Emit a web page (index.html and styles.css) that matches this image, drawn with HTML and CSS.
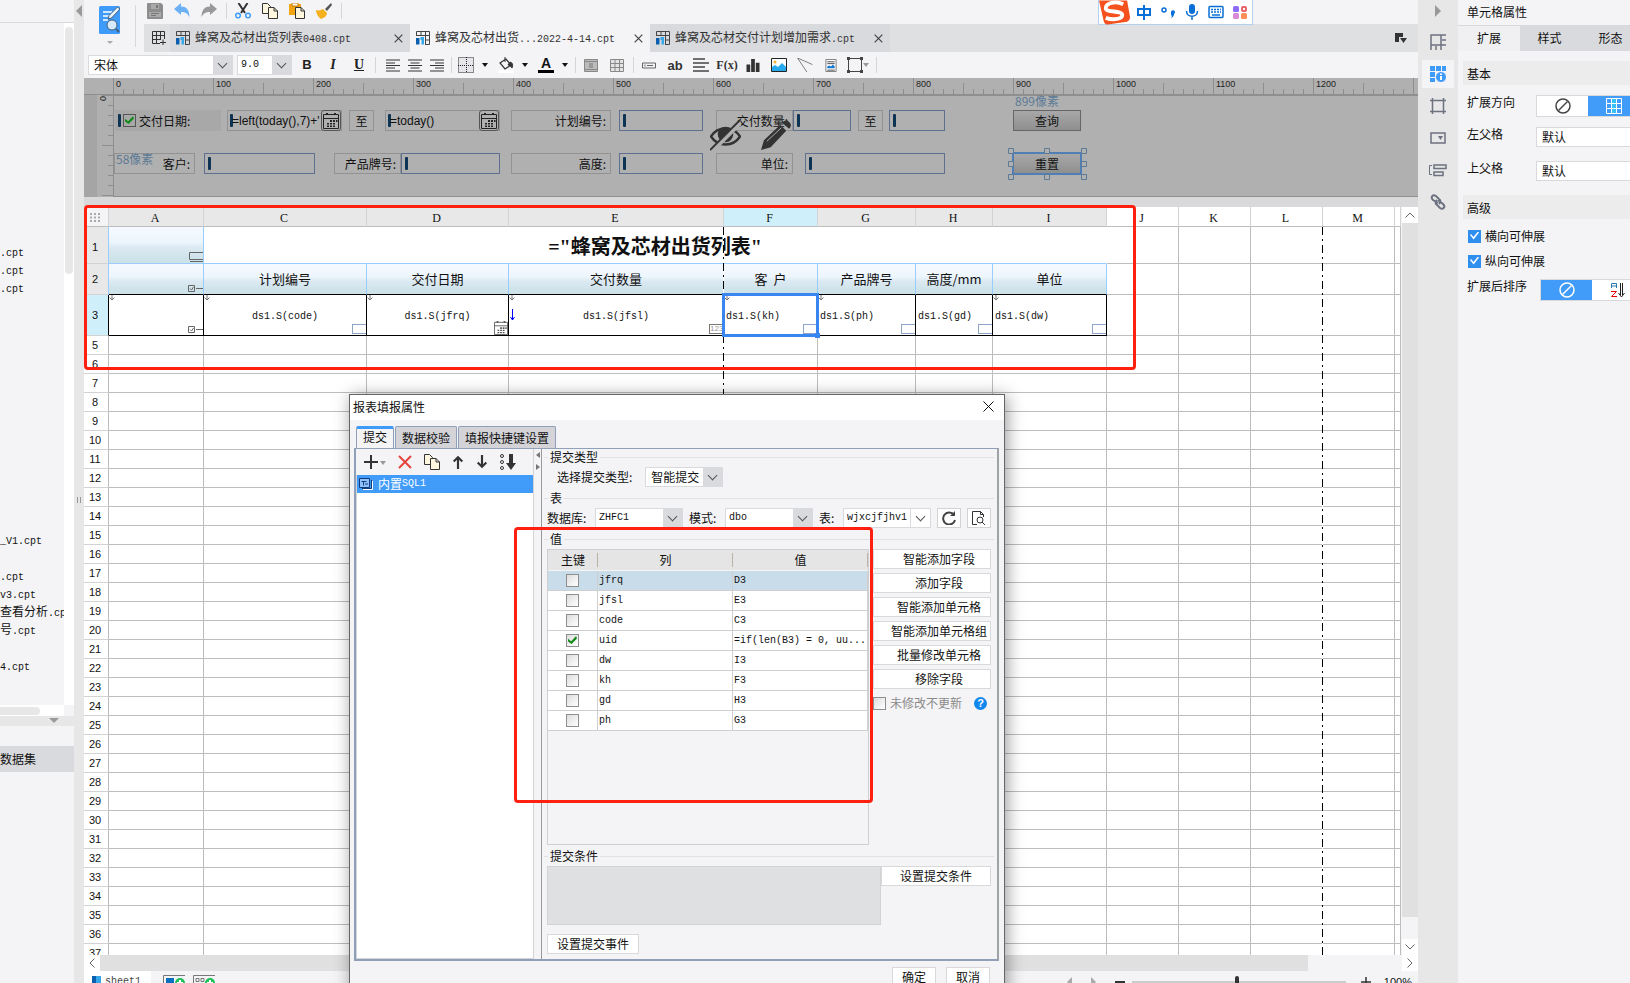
FILE: index.html
```html
<!DOCTYPE html>
<html lang="zh-CN">
<head>
    <meta charset="UTF-8">
    <meta name="viewport" content="width=device-width, initial-scale=1.0">
    <title>蜂窝及芯材出货列表</title>
    <link rel="stylesheet" href="styles.css">
</head>
<body>

    <!-- iconos compartidos -->
    <svg class="defs" aria-hidden="true">
        <symbol id="i-cpt" viewBox="0 0 14 14">
            <path d="M.5 5V.5h13v13H9M.5 4.500h13M5 .5v4M9.500 .5v13M9.500 9h4" fill="none" stroke="#444"/>
            <path d="M0 7h3.500v6.500H0z" fill="#0a5fae"/>
            <path d="M4.500 6h3.500v7.500H5.500V9H4.500z" fill="#35a7e8"/>
        </symbol>
        <symbol id="i-close" viewBox="0 0 9 9"><path d="M.7.7l7.600 7.600M8.300.7L.7 8.300" stroke="#444" stroke-width="1.200"/></symbol>
        <symbol id="i-copy" viewBox="0 0 16 16">
            <path d="M.5.5h5l3 3v7h-8z" fill="#fff6df" stroke="#333"/>
            <path d="M6.500 4.500h5.500l3.500 3.500v7.500h-9z" fill="#fff6df" stroke="#333"/>
            <path d="M12 4.500V8h3.500" fill="none" stroke="#333"/>
        </symbol>
        <symbol id="i-cal" viewBox="0 0 16 16">
            <path d="M.5 1.500h15v14H.5zM.5 5.500h15" fill="none" stroke="currentColor"/>
            <path d="M3 0h2v2H3zM11 0h2v2h-2zM7 7h2v2H7zM10 7h2v2h-2zM13 7h1.500v2H13zM4 10h2v1.500H4zM7 10h2v1.500H7zM10 10h2v1.500h-2zM4 12.500h2V14H4zM7 12.500h2V14H7zM10 12.500h2V14h-2z" fill="currentColor"/>
        </symbol>
        <symbol id="i-none" viewBox="0 0 16 16"><circle cx="8" cy="8" r="7" fill="none" stroke="currentColor" stroke-width="1.500"/><path d="M3.500 12.500l9-9" stroke="currentColor" stroke-width="1.500"/></symbol>
        <symbol id="i-grow" viewBox="0 0 6 6"><path d="M3 0v5M.5 2.500L3 5l2.500-2.500" fill="none" stroke="#777"/></symbol>
        <symbol id="i-tick" viewBox="0 0 15 7"><path d="M.5.5h6v6h-6zM8 3.500h7M2 3.500l1.500 1.500L5.500 2" fill="none" stroke="#666"/></symbol>
    </svg>

    <div class="app">

        <aside class="files">
            <div class="files-head"></div>
            <div class="files-body">
                <ul class="file-list">
                    <li><span class="m">.cpt</span></li>
                    <li><span class="m">.cpt</span></li>
                    <li><span class="m">.cpt</span></li>
                    <li class="far"><span class="m">_V1.cpt</span></li>
                    <li class="skip"><span class="m">.cpt</span></li>
                    <li><span class="m">v3.cpt</span></li>
                    <li>查看分析<span class="m">.cpt</span></li>
                    <li>号<span class="m">.cpt</span></li>
                    <li class="skip"><span class="m">4.cpt</span></li>
                </ul>
                <div class="files-scroll"><i></i></div>
            </div>
            <div class="files-hscroll"><i></i></div>
            <div class="files-split"><i></i></div>
            <div class="dataset">数据集</div>
        </aside>

        <div class="gutter">
            <svg class="gutter-arrow" viewBox="0 0 6 12"><path d="M6 0v12L0 6z" fill="#999"/></svg>
            <svg class="gutter-grip" viewBox="0 0 4 6"><path d="M.5 0v6M3.500 0v6" stroke="#999"/></svg>
        </div>

        <main class="work">
            <header class="top">
                <button class="app-btn" aria-label="预览">
                    <svg class="app-icon" viewBox="0 0 22 29">
                        <rect width="21" height="28" y="0" rx="1.500" fill="#3f9bf9"/>
                        <path d="M4 6h9M4 10h6M4 14h5" stroke="#fff" stroke-width="1.500"/>
                        <path d="M9 13l1-3.500L18.500 1l2.500 2-8.500 9z" fill="#e8f2fb" stroke="#44617c"/>
                        <circle cx="13" cy="19" r="5" fill="#d5ebfb" stroke="#44617c"/>
                        <path d="M17 23l3 3" stroke="#44617c" stroke-width="2"/>
                    </svg>
                    <svg class="app-caret" viewBox="0 0 6 3"><path d="M0 0h6L3 3z" fill="#aaa"/></svg>
                </button>
                <div class="top-main">
                    <div class="quick">
                        <button aria-label="保存"><svg viewBox="0 0 16 16"><path d="M0 1a1 1 0 0 1 1-1h13l2 2v13a1 1 0 0 1-1 1H1a1 1 0 0 1-1-1z" fill="#8d8d8d"/><path d="M4 1h8v5H4z" fill="#a9a9a9"/><path d="M9 2h2v3H9z" fill="#777"/><path d="M2 9h12v5H2z" fill="#a9a9a9"/><path d="M4 10.500h8M4 12.500h5" stroke="#777"/></svg></button>
                        <button aria-label="撤销"><svg viewBox="0 0 16 16"><path d="M0 6l7-6v3.500c5 0 8.500 3 8.500 11-1.500-4-4-5.500-8.500-5.500V12z" fill="#6cb0f5"/></svg></button>
                        <button aria-label="重做"><svg viewBox="0 0 16 16"><path d="M16 6L9 0v3.500C4 3.500.5 6.500.5 14.500 2 10.500 4.500 9 9 9v3z" fill="#999"/></svg></button>
                        <i class="sep"></i>
                        <button aria-label="剪切"><svg viewBox="0 0 16 16"><path d="M3.500 0l6.500 10M12.500 0L6 10" stroke="#333" stroke-width="2"/><circle cx="3" cy="12.500" r="2.300" fill="none" stroke="#3f9bf9" stroke-width="1.500"/><circle cx="13" cy="12.500" r="2.300" fill="none" stroke="#3f9bf9" stroke-width="1.500"/></svg></button>
                        <button aria-label="复制"><svg><use href="#i-copy"/></svg></button>
                        <button aria-label="粘贴"><svg viewBox="0 0 16 16"><path d="M0 1h12v11H0z" fill="#f2a413"/><path d="M3 0h6v3H3z" fill="#fff" stroke="#c47f05"/><path d="M6.500 4.500h5.500l3.500 3.500v7.500h-9z" fill="#fff6df" stroke="#333"/><path d="M12 4.500V8h3.500" fill="none" stroke="#333"/></svg></button>
                        <button aria-label="格式刷"><svg viewBox="0 0 16 16"><path d="M15 0l1 2-5 6-2-2z" fill="#555"/><path d="M0 7c3 1 5 0 7-1l4 4c0 3-3 5-6 6-3-2-5-6-5-9z" fill="#f5b01e"/></svg></button>
                        <i class="sep"></i>
                    </div>
                    <nav class="tabs">
                        <button class="tab-new" aria-label="新建"><svg viewBox="0 0 14 14"><path d="M8 12.500H.5V.5h12V8M.5 4.500h12M.5 8.500H9M4.500 .5v12M8.500.5v8M8 11.500h6M11 8.500v6" fill="none" stroke="#333"/></svg></button>
                        <div class="tab"><svg class="cpt"><use href="#i-cpt"/></svg><span>蜂窝及芯材出货列表<span class="m">0408.cpt</span></span><button aria-label="关闭"><svg><use href="#i-close"/></svg></button></div>
                        <div class="tab active"><svg class="cpt"><use href="#i-cpt"/></svg><span>蜂窝及芯材出货<span class="m">...2022-4-14.cpt</span></span><button aria-label="关闭"><svg><use href="#i-close"/></svg></button></div>
                        <div class="tab"><svg class="cpt"><use href="#i-cpt"/></svg><span>蜂窝及芯材交付计划增加需求<span class="m">.cpt</span></span><button aria-label="关闭"><svg><use href="#i-close"/></svg></button></div>
                        <svg class="tab-menu" viewBox="0 0 12 10"><path d="M0 0h8v4H4v5H0z" fill="#333"/><path d="M5 5h7l-3.500 5z" fill="#333"/></svg>
                    </nav>
                </div>
                <div class="ime">
                    <svg class="sogou" viewBox="0 0 32 25"><path d="M0 0h29l3 17c0 3-1 4-3 5l-20 3c-2 0-3-1-4-3z" fill="#f4511e"/><path d="M25 4C17 0 7 3 7 8c0 5 17 2 17 7 0 4-9 6-17 3" fill="none" stroke="#fff" stroke-width="4"/></svg>
                    <svg viewBox="0 0 16 16"><path d="M2 5h12v6H2zM8 1v15" fill="none" stroke="#0a6fd6" stroke-width="2"/></svg>
                    <svg viewBox="0 0 16 16"><circle cx="4" cy="6" r="2" fill="none" stroke="#0a6fd6" stroke-width="1.500"/><path d="M11 8a2 2 0 1 1 3 2c0 2-1 3-3 4 1-2 1-2 0-3z" fill="#0a6fd6"/></svg>
                    <svg viewBox="0 0 16 16"><rect x="5" y="0" width="6" height="10" rx="3" fill="#0a6fd6"/><path d="M2.500 7c0 7 11 7 11 0M8 12v4" fill="none" stroke="#0a6fd6" stroke-width="1.500"/></svg>
                    <svg viewBox="0 0 16 16"><rect x="1" y="2.500" width="14" height="11" rx="1" fill="none" stroke="#0a6fd6" stroke-width="1.500"/><path d="M3 5.500h10M3 8h10" stroke="#0a6fd6" stroke-width="1.500" stroke-dasharray="2 1"/><path d="M4 11h8" stroke="#0a6fd6" stroke-width="1.500"/></svg>
                    <svg viewBox="0 0 16 16"><rect x="1" y="2" width="6" height="6" rx="1.500" fill="#8f6cf5"/><rect x="10" y="3" width="4" height="4" rx="1" fill="none" stroke="#e8646a" stroke-width="2"/><rect x="1" y="9" width="6" height="6" rx="1.500" fill="#d88ad8"/><rect x="9" y="9" width="6" height="6" rx="1.500" fill="#ff8e56"/></svg>
                </div>
            </header>

            <div class="format">
                <div class="combo font-combo"><select aria-label="字体"><option>宋体</option></select></div>
                <div class="combo size-combo"><select class="m" aria-label="字号"><option>9.0</option></select></div>
                <button class="fb" aria-label="加粗"><b>B</b></button>
                <button class="fb" aria-label="斜体"><em>I</em></button>
                <button class="fb" aria-label="下划线"><u>U</u></button>
                <i class="sep"></i>
                <button class="ic" aria-label="左对齐"><svg viewBox="0 0 14 12"><path d="M0 .5h14M0 3.500h9M0 6h14M0 8.500h9M0 11.500h14" stroke="#333"/></svg></button>
                <button class="ic" aria-label="居中"><svg viewBox="0 0 14 12"><path d="M0 .5h14M2.500 3.500h9M0 6h14M2.500 8.500h9M0 11.500h14" stroke="#333"/></svg></button>
                <button class="ic" aria-label="右对齐"><svg viewBox="0 0 14 12"><path d="M0 .5h14M5 3.500h9M0 6h14M5 8.500h9M0 11.500h14" stroke="#333"/></svg></button>
                <i class="sep"></i>
                <button class="ic drop" aria-label="边框"><svg viewBox="0 0 16 16"><path d="M.5.500h15v15H.5zM8.500 0v16M0 8.500h16" fill="#e6e6ea" stroke="#222" stroke-dasharray="1 1"/></svg></button>
                <button class="ic drop" aria-label="背景"><svg viewBox="0 0 16 16"><path d="M2 6l6-4 5 6-6 4z" fill="none" stroke="#333" stroke-width="1.300"/><path d="M7 0v5M12 5c3 1 3 3 2 6-1-2-3-3-4-3z" fill="#333" stroke="#333"/><path d="M0 13h16v3H0z" fill="#fff"/></svg></button>
                <button class="ic drop" aria-label="字体颜色"><span class="color-a">A</span></button>
                <i class="sep tight"></i>
                <button class="ic wide" aria-label="合并"><svg viewBox="0 0 14 13"><path d="M.5.5h13v12H.5z" fill="#bbb" stroke="#888"/><path d="M0 2.500h14M0 10.500h14" stroke="#888"/><path d="M5 4h4v5H5z" fill="#999"/></svg></button>
                <button class="ic wide" aria-label="取消合并"><svg viewBox="0 0 14 13"><path d="M.5.5h13v12H.5z" fill="#e4e4e4" stroke="#888"/><path d="M0 4.500h14M0 8.500h14M5 0v13M9.500 0v13" stroke="#888"/></svg></button>
                <i class="sep tight"></i>
                <button class="ic wide" aria-label="控件"><svg viewBox="0 0 14 6"><path d="M.5.500h13v5H.5zM5 3h6M3 2v2" fill="none" stroke="#666"/></svg></button>
                <button class="ic wide ab" aria-label="文本">ab</button>
                <button class="ic wide" aria-label="富文本"><svg class="big" viewBox="0 0 16 14"><path d="M0 1h12M0 5h16M0 9h12M0 13h16" stroke="#444" stroke-width="1.500"/></svg></button>
                <button class="ic wide fx" aria-label="公式">F(x)</button>
                <button class="ic wide" aria-label="图表"><svg viewBox="0 0 14 14"><path d="M0 6h4v8H0zM5 0h4v14H5zM10 4h4v10h-4z" fill="#333"/></svg></button>
                <button class="ic wide" aria-label="图片"><svg class="big" viewBox="0 0 16 14"><path d="M.5.500h15v13H.5z" fill="#fff" stroke="#222"/><circle cx="4" cy="4" r="1.500" fill="#f5b030"/><path d="M1 13V9l3-2 3 2 4-4 4 4v4z" fill="#27a9ee"/></svg></button>
                <button class="ic wide" aria-label="斜线"><svg class="big" viewBox="0 0 16 15"><path d="M0 0l16 7M0 0l10 15" stroke="#777" fill="none"/></svg></button>
                <button class="ic wide" aria-label="子报表"><svg viewBox="0 0 12 14"><path d="M.5.500h11v13H.5z" fill="#fff" stroke="#777"/><path d="M2 3h8M2 5h8M2 12h8" stroke="#444"/><path d="M2 10V8l2-1 2 1 2-2 2 2v2z" fill="#1478d0"/></svg></button>
                <button class="ic drop pale" aria-label="悬浮元素"><svg viewBox="0 0 16 16"><path d="M1.500 1.500h13v13h-13z" fill="none" stroke="#444"/><path d="M0 0h3v3H0zM13 0h3v3h-3zM0 13h3v3H0zM13 13h3v3h-3z" fill="#444"/></svg></button>
                <i class="sep end"></i>
            </div>

            <section class="param">
                <div class="ruler-x">
                    <span>0</span><span>100</span><span>200</span><span>300</span><span>400</span><span>500</span><span>600</span><span>700</span><span>800</span><span>900</span><span>1000</span><span>1100</span><span>1200</span>
                </div>
                <div class="ruler-y"><span>0</span></div>
                <div class="canvas">
                    <label class="w r1 w-date"><input type="checkbox" class="box" checked>交付日期:</label>
                    <div class="w r1 w-from bar plain"><input value="=left(today(),7)+'" aria-label="开始日期"><button class="cal" aria-label="选择日期"><svg><use href="#i-cal"/></svg></button></div>
                    <div class="w r1 w-to1 mid">至</div>
                    <div class="w r1 w-until bar plain"><input value="=today()" aria-label="结束日期"><button class="cal" aria-label="选择日期"><svg><use href="#i-cal"/></svg></button></div>
                    <label class="w r1 w-l1" for="p-plan">计划编号:</label>
                    <div class="w r1 w-i1 bar"><input id="p-plan"></div>
                    <label class="w r1 w-l2" for="p-min">交付数量:</label>
                    <div class="w r1 w-min bar"><input id="p-min"></div>
                    <div class="w r1 w-to2 mid">至</div>
                    <div class="w r1 w-max bar"><input aria-label="最大数量"></div>
                    <button class="w r1 w-btn">查询</button>
                    <label class="w r2 w-kh" for="p-kh">客户:</label>
                    <div class="w r2 w-ikh bar"><input id="p-kh"></div>
                    <label class="w r2 w-ph" for="p-ph">产品牌号:</label>
                    <div class="w r2 w-iph bar"><input id="p-ph"></div>
                    <label class="w r2 w-l1" for="p-gd">高度:</label>
                    <div class="w r2 w-i1 bar"><input id="p-gd"></div>
                    <label class="w r2 w-l2" for="p-dw">单位:</label>
                    <div class="w r2 w-idw bar"><input id="p-dw"></div>
                    <button class="w r2 w-btn picked">重置</button>
                    <svg class="handles" viewBox="0 0 80 32"><path d="M.5.500h5v5h-5zM36.500.500h5v5h-5zM73.500.500h5v5h-5zM.5 13.500h5v5h-5zM73.500 13.500h5v5h-5zM.5 26.500h5v5h-5zM36.500 26.500h5v5h-5zM73.500 26.500h5v5h-5z" fill="#b0b0b0" stroke="#5c7a96"/></svg>
                    <span class="px px-top">899像素</span>
                    <span class="px px-left">58像素</span>
                    <svg class="eye" viewBox="0 0 32 32"><path d="M1 17C8 6 24 6 31 17 24 28 8 28 1 17z" fill="none" stroke="#333" stroke-width="2.500"/><circle cx="16" cy="15" r="8" fill="#333"/><path d="M3 31L31 3" stroke="#b0b0b0" stroke-width="5"/><path d="M0 31L31 0" stroke="#333" stroke-width="2"/></svg>
                    <svg class="pencil" viewBox="0 0 32 32"><path d="M0 31l3-10L20 5l6 6-16 17zM22 3c2-3 5-3 7-1s3 4 0 7z" fill="#333"/><path d="M6 22L21 8" stroke="#b0b0b0"/></svg>
                </div>
            </section>

            <section class="sheet">
                <div class="grid-wrap">
                    <table class="grid">
                        <colgroup><col class="c-n"><col class="c-a"><col class="c-c"><col class="c-d"><col class="c-e"><col class="c-f"><col class="c-g"><col class="c-h"><col class="c-i"><col class="c-j"><col class="c-j"><col class="c-j"><col class="c-j"><col></colgroup>
                        <thead>
                            <tr><th class="corner"><svg viewBox="0 0 10 9"><path d="M0 1h10M0 4.500h10M0 8h10" stroke="#aaa" stroke-width="2" stroke-dasharray="2 2"/></svg></th><th>A</th><th>C</th><th>D</th><th>E</th><th class="hot">F</th><th>G</th><th>H</th><th>I</th><th class="out">J</th><th class="out">K</th><th class="out">L</th><th class="out">M</th><th class="out"></th></tr>
                        </thead>
                        <tbody id="rows">
                            <tr class="row1"><th>1</th><td class="shade"><svg class="mark mark-text" viewBox="0 0 14 10"><path d="M14 .5H.5v7H14M1 9.500h13" fill="none" stroke="#666"/></svg></td><td class="title" colspan="7">="蜂窝及芯材出货列表"</td><td></td><td></td><td></td><td></td><td></td></tr>
                            <tr class="row2"><th>2</th><td class="shade"><svg class="mark mark-tick"><use href="#i-tick"/></svg></td><td class="shade">计划编号</td><td class="shade">交付日期</td><td class="shade">交付数量</td><td class="shade">客&nbsp; 户</td><td class="shade">产品牌号</td><td class="shade">高度/mm</td><td class="shade">单位</td><td></td><td></td><td></td><td></td><td></td></tr>
                            <tr class="row3 m"><th class="hot">3</th><td class="ink"><svg class="grow"><use href="#i-grow"/></svg><svg class="mark mark-tick"><use href="#i-tick"/></svg></td><td class="ink"><svg class="grow"><use href="#i-grow"/></svg>ds1.S(code)<i class="mark mark-box"></i></td><td class="ink"><svg class="grow"><use href="#i-grow"/></svg>ds1.S(jfrq)<svg class="mark mark-cal"><use href="#i-cal"/></svg></td><td class="ink"><svg class="grow"><use href="#i-grow"/></svg><svg class="parent" viewBox="0 0 5 12"><path d="M2.500 0v11M.5 8l2 3 2-3" fill="none" stroke="#00f"/></svg>ds1.S(jfsl)<i class="mark mark-num">123</i></td><td class="ink start"><svg class="grow"><use href="#i-grow"/></svg>ds1.S(kh)<i class="mark mark-box"></i><i class="cursor"></i></td><td class="ink start"><svg class="grow"><use href="#i-grow"/></svg>ds1.S(ph)<i class="mark mark-box"></i></td><td class="ink start">ds1.S(gd)<i class="mark mark-box"></i></td><td class="ink start"><svg class="grow"><use href="#i-grow"/></svg>ds1.S(dw)<i class="mark mark-box"></i></td><td></td><td></td><td></td><td></td><td></td></tr>
                        </tbody>
                    </table>
                    <i class="page-line page-1"></i>
                    <i class="page-line page-2"></i>
                </div>
                <div class="vscroll">
                    <button aria-label="向上"><svg viewBox="0 0 10 6"><path d="M.5 5.500L5 1l4.500 4.500" fill="none" stroke="#666"/></svg></button>
                    <i></i>
                    <button aria-label="向下"><svg viewBox="0 0 10 6"><path d="M.5.500L5 5 9.500.500" fill="none" stroke="#666"/></svg></button>
                </div>
            </section>

            <div class="hscroll">
                <button aria-label="向左"><svg viewBox="0 0 6 10"><path d="M5.500.500L1 5l4.500 4.500" fill="none" stroke="#666"/></svg></button>
                <i></i>
                <button aria-label="向右"><svg viewBox="0 0 6 10"><path d="M.5.500L5 5 .5 9.500" fill="none" stroke="#666"/></svg></button>
            </div>

            <footer class="status">
                <div class="status-in">
                    <button class="sheet-tab"><svg viewBox="0 0 9 12"><path d="M0 0h4v12H0z" fill="#0a5fae"/><path d="M4 0h5v9H4z" fill="#35a7e8"/></svg><span class="m">sheet1</span></button>
                    <button class="sheet-add" aria-label="新增报表"><svg viewBox="0 0 22 14"><path d="M22 .5H.5V14" fill="none" stroke="#777"/><path d="M3 3h8v11H3z" fill="#0a6fc0"/><circle cx="17" cy="8" r="5" fill="#1fbf5a"/><path d="M14 8h6M17 5v6" stroke="#fff" stroke-width="2"/></svg></button>
                    <button class="sheet-add" aria-label="新增聚合报表"><svg viewBox="0 0 22 14"><path d="M22 .5H.5V14M3 3.500h3v3H3zM8 3.500h3v3H8z" fill="none" stroke="#777"/><circle cx="17" cy="8" r="5" fill="#1fbf5a"/><path d="M14 8h6M17 5v6" stroke="#fff" stroke-width="2"/></svg></button>
                    <div class="zoom">
                        <svg class="z-prev" viewBox="0 0 5 10"><path d="M5 0v10L0 5z" fill="#aaa"/></svg>
                        <svg class="z-next" viewBox="0 0 5 10"><path d="M0 0v10l5-5z" fill="#aaa"/></svg>
                        <button aria-label="缩小"><svg viewBox="0 0 10 10"><path d="M0 5h10" stroke="#333" stroke-width="2"/></svg></button>
                        <input type="range" min="10" max="200" value="103" aria-label="缩放">
                        <button aria-label="放大"><svg viewBox="0 0 10 10"><path d="M0 5h10M5 0v10" stroke="#333" stroke-width="1.500"/></svg></button>
                        <span>100%</span>
                    </div>
                </div>
            </footer>

            <div class="dialog" role="dialog" aria-label="报表填报属性">
                <div class="dlg-title"><span>报表填报属性</span><button aria-label="关闭"><svg viewBox="0 0 11 11"><path d="M.5.500l10 10M10.500.500l-10 10" stroke="#111"/></svg></button></div>
                <div class="dlg-tabs">
                    <button class="on">提交</button><button>数据校验</button><button>填报快捷键设置</button>
                </div>
                <div class="dlg-pane">
                    <div class="dlg-left">
                        <div class="dlg-tools">
                            <button aria-label="添加"><svg viewBox="0 0 22 14"><path d="M0 7h14M7 0v14" stroke="#333" stroke-width="2"/><path d="M16 6h6l-3 4z" fill="#999"/></svg></button>
                            <button aria-label="删除"><svg viewBox="0 0 14 14"><path d="M1 1l12 12M13 1L1 13" stroke="#e5433d" stroke-width="2"/></svg></button>
                            <button aria-label="复制"><svg><use href="#i-copy"/></svg></button>
                            <button aria-label="上移"><svg viewBox="0 0 10 13"><path d="M5 13V2M1 6l4-4 4 4" fill="none" stroke="#333" stroke-width="2"/></svg></button>
                            <button aria-label="下移"><svg viewBox="0 0 10 13"><path d="M5 0v11M1 7l4 4 4-4" fill="none" stroke="#333" stroke-width="2"/></svg></button>
                            <button aria-label="排序"><svg viewBox="0 0 16 16"><path d="M9 0h4v9h3l-5 7-5-7h3z" fill="#333"/><circle cx="2" cy="2" r="1.500" fill="none" stroke="#333"/><circle cx="2" cy="8" r="1.500" fill="none" stroke="#333"/><circle cx="2" cy="14" r="1.500" fill="none" stroke="#333"/></svg></button>
                        </div>
                        <ul class="dlg-list"><li><svg viewBox="0 0 14 12"><path d="M.5.500h10v9H.5z" fill="#8fc2fb" stroke="#123a7c"/><path d="M13.500 3v8.500H4" fill="none" stroke="#fff"/><path d="M2.500 3.500h5M4.500 3.500v4M6 6h3" stroke="#123a7c"/><path d="M12.500 2v8.500H3" fill="none" stroke="#123a7c"/></svg>内置<span class="m">SQL1</span></li></ul>
                    </div>
                    <div class="dlg-split"><svg viewBox="0 0 4 18"><path d="M4 0v6L0 3zM0 12v6l4-3z" fill="#777"/></svg></div>
                    <div class="dlg-main">
                        <div class="legend"><span>提交类型</span></div>
                        <div class="line line-type">
                            <label for="d-type">选择提交类型:</label>
                            <div class="combo"><select id="d-type"><option>智能提交</option></select></div>
                        </div>
                        <div class="legend"><span>表</span></div>
                        <div class="line line-db">
                            <label class="l3" for="d-db">数据库:</label>
                            <div class="combo"><select id="d-db" class="m"><option>ZHFC1</option></select></div>
                            <label class="l2" for="d-mode">模式:</label>
                            <div class="combo"><select id="d-mode" class="m"><option>dbo</option></select></div>
                            <label class="l1" for="d-table">表:</label>
                            <div class="combo light"><select id="d-table" class="m"><option>wjxcjfjhv1</option></select></div>
                            <button class="sq" aria-label="刷新"><svg viewBox="0 0 14 14"><path d="M12 4a6 6 0 1 0 1 5" fill="none" stroke="#444" stroke-width="2"/><path d="M13 0v5H8z" fill="#444"/></svg></button>
                            <button class="sq" aria-label="预览"><svg viewBox="0 0 14 14"><path d="M5 13.500H.5V.500h8l3 3V6M8.500.500v3h3" fill="none" stroke="#333"/><circle cx="8" cy="9" r="3" fill="none" stroke="#333"/><path d="M10 11l3 3" stroke="#333"/></svg></button>
                        </div>
                        <div class="legend"><span>值</span></div>
                        <div class="line line-values">
                            <div class="values">
                                <table>
                                    <thead><tr><th>主键</th><th>列</th><th>值</th></tr></thead>
                                    <tbody id="fields"></tbody>
                                </table>
                            </div>
                            <div class="ops">
                                <button>智能添加字段</button>
                                <button>添加字段</button>
                                <button>智能添加单元格</button>
                                <button>智能添加单元格组</button>
                                <button>批量修改单元格</button>
                                <button>移除字段</button>
                                <label><input type="checkbox" class="box" disabled>未修改不更新<i class="help">?</i></label>
                            </div>
                        </div>
                        <div class="legend"><span>提交条件</span></div>
                        <div class="line line-cond">
                            <textarea disabled aria-label="提交条件"></textarea>
                            <button>设置提交条件</button>
                        </div>
                        <button class="event-btn">设置提交事件</button>
                    </div>
                </div>
                <div class="dlg-foot"><button>确定</button><button>取消</button></div>
            </div>

            <i class="note note-grid"></i>
            <i class="note note-values"></i>
        </main>

        <nav class="rail">
            <svg class="rail-arrow" viewBox="0 0 6 12"><path d="M0 0v12l6-6z" fill="#999"/></svg>
            <button aria-label="单元格元素"><svg viewBox="0 0 16 16"><path d="M1 16V1h15M1 11h11M11 1v15M12 6h4M12 11h4M6 12v4" fill="none" stroke="#6d7280" stroke-width="1.500"/></svg></button>
            <button class="on" aria-label="单元格属性"><svg viewBox="0 0 16 16"><path d="M0 0h5v5H0zM6 0h5v5H6zM12 0h4v5h-4zM0 6h5v5H0zM0 12h5v4H0z" fill="#3f9bf9"/><circle cx="11" cy="11" r="5.500" fill="#3f9bf9" stroke="#f4f4f7"/><path d="M11 10v4M11 7.500v1.500" stroke="#fff" stroke-width="2"/></svg></button>
            <button aria-label="悬浮元素"><svg viewBox="0 0 16 16"><path d="M2.500 0v16M13.500 0v16M0 2.500h16M0 13.500h16" stroke="#6d7280" stroke-width="1.500"/></svg></button>
            <button aria-label="控件设置"><svg viewBox="0 0 16 12"><path d="M1 1h14v10H1z" fill="none" stroke="#6d7280" stroke-width="1.500"/><path d="M8 4h5l-2.500 4z" fill="#6d7280"/></svg></button>
            <button aria-label="条件属性"><svg class="wide-icon" viewBox="0 0 18 12"><path d="M5 1h12v3.500H5zM5 8h9v3.500H5z" fill="none" stroke="#6d7280" stroke-width="1.500"/><path d="M3 1.500H.5v9H3" fill="none" stroke="#6d7280"/></svg></button>
            <button aria-label="超级链接"><svg viewBox="0 0 16 16"><path d="M8 9L3 6C0 3 3 0 6 2l4 4c1 2 0 3-1 4M8 6l5 4c3 3 0 6-3 4L6 10C5 8 6 7 7 6" fill="none" stroke="#6d7280" stroke-width="2"/></svg></button>
        </nav>

        <aside class="props">
            <h2>单元格属性</h2>
            <div class="prop-tabs"><button class="on">扩展</button><button>样式</button><button>形态</button></div>
            <h3>基本</h3>
            <div class="prop"><span>扩展方向</span><div class="seg"><button aria-label="不扩展"><svg><use href="#i-none"/></svg></button><button class="on" aria-label="纵向"><svg viewBox="0 0 16 16"><path d="M5.500 0h5v16h-5z" fill="#35c3f5"/><path d="M.5.500h15v15H.5zM5.500 0v16M10.500 0v16M0 5.500h16M0 10.500h16" fill="none" stroke="#fff"/></svg></button></div></div>
            <div class="prop"><label for="g-left">左父格</label><select id="g-left"><option>默认</option></select></div>
            <div class="prop"><label for="g-up">上父格</label><select id="g-up"><option>默认</option></select></div>
            <h3>高级</h3>
            <label class="prop-check"><input type="checkbox" checked>横向可伸展</label>
            <label class="prop-check"><input type="checkbox" checked>纵向可伸展</label>
            <div class="prop sort"><span>扩展后排序</span><div class="seg"><button class="on" aria-label="不排序"><svg><use href="#i-none"/></svg></button><button aria-label="升序"><svg viewBox="0 0 16 16"><path d="M1.500 6V1.500h5V6M1.500 4h5" fill="none" stroke="#2a7ab0"/><path d="M1 9.500h5.500L1.500 14.500H7" fill="none" stroke="#e00"/><path d="M10.500 1v12M12.500 1v12M8.500 11l3 4 3-4" fill="none" stroke="#222"/></svg></button></div></div>
        </aside>
    </div>

    <script src="script.js"></script>
</body>
</html>
```

FILE: styles.css
```css
* {
    box-sizing: border-box;
}
body {
    margin: 0;
    height: 100vh;
    overflow: hidden;
    background-color: #f4f4f7;
    color: #111;
    font-family: "Noto Sans CJK SC", sans-serif;
    font-size: 12px;
    line-height: 16px;
}
button, input, select, textarea {
    font: inherit;
    color: inherit;
    margin: 0;
    padding: 0;
    border: none;
    border-radius: 0;
    background: none;
    outline: none;
}
select {
    appearance: none;
}
svg {
    display: block;
    flex: none;
}
ul {
    list-style: none;
    margin: 0;
    padding: 0;
}
.defs {
    position: absolute;
    width: 0;
    height: 0;
}
.m {
    font-family: "Liberation Mono", "Noto Sans CJK SC", monospace;
    font-size: 10px;
}
.sep {
    flex: none;
    width: 1px;
    height: 16px;
    background-color: #d5d5d8;
}
.app {
    display: flex;
    height: 100%;
}

/* panel izquierdo */
.files {
    flex: 0 0 74px;
    display: flex;
    flex-direction: column;
    min-width: 0;
}
.files-head {
    height: 23px;
    border-bottom: 1px solid #d9d9dc;
}
.files-body {
    display: flex;
    height: 682px;
}
.file-list {
    flex: 1;
    overflow: hidden;
    padding-top: 220px;
    white-space: nowrap;
}
.file-list li {
    height: 18px;
    line-height: 16px;
}
.file-list .skip {
    margin-top: 18px;
}
.file-list .far {
    margin-top: 234px;
}
.files-scroll {
    width: 10px;
    padding: 4px 1px;
    background-color: #fff;
}
.files-scroll i {
    display: block;
    height: 247px;
    border-radius: 4px;
    background-color: #e7e7e7;
}
.files-hscroll {
    height: 11px;
    padding: 2px 0;
    margin-right: 10px;
    background-color: #fff;
}
.files-hscroll i {
    display: block;
    width: 40px;
    height: 8px;
    border-radius: 0 4px 4px 0;
    background-color: #e7e7e7;
}
.files-split {
    height: 10px;
    background-color: #e7e7e7;
}
.files-split i {
    display: block;
    width: 10px;
    height: 5px;
    margin: 2px 0 0 49px;
    background-color: #999;
    clip-path: polygon(0 0, 100% 0, 50% 100%);
}
.dataset {
    height: 26px;
    margin-top: 20px;
    line-height: 26px;
    background-color: #d9dadd;
}
.gutter {
    flex: 0 0 10px;
    display: flex;
    flex-direction: column;
    align-items: center;
    background-color: #e7e7e7;
}
.gutter-arrow {
    width: 6px;
    height: 12px;
    margin-top: 5px;
}
.gutter-grip {
    width: 4px;
    height: 6px;
    margin-top: 480px;
}

/* barra superior */
.work {
    position: relative;
    flex: 1;
    min-width: 0;
    display: flex;
    flex-direction: column;
    overflow: hidden;
}
.top {
    display: flex;
    flex: 0 0 52px;
}
.app-btn {
    flex: 0 0 60px;
    height: 42px;
    margin-top: 5px;
    padding: 1px 0 0 15px;
    display: flex;
    flex-direction: column;
    position: relative;
}
.app-btn::after {
    content: "";
    position: absolute;
    right: 8px;
    top: 0;
    width: 1px;
    height: 42px;
    background-color: #d9d9dc;
}
.app-icon {
    width: 22px;
    height: 29px;
}
.app-caret {
    width: 6px;
    height: 3px;
    margin: 6px 0 0 8px;
}
.top-main {
    flex: 1;
    min-width: 0;
}
.quick {
    display: flex;
    align-items: center;
    gap: 11px;
    height: 24px;
    padding: 0 3px 2px;
}
.quick svg {
    width: 16px;
    height: 16px;
}
.quick .sep {
    margin: 0 -3px 0 -2px;
}
.tabs {
    display: flex;
    height: 28px;
    background-color: #dfe0e2;
    color: #333;
}
.tab-new {
    width: 26px;
    padding-left: 8px;
}
.tab-new svg, .cpt {
    width: 14px;
    height: 14px;
}
.tab {
    width: 240px;
    display: flex;
    align-items: center;
    padding: 0 7px 0 6px;
    background-color: #d9dadd;
    white-space: nowrap;
}
.tab > span {
    flex: 1;
    margin-left: 5px;
}
.tab button svg {
    width: 9px;
    height: 9px;
}
.tab.active {
    background-color: #f4f4f7;
}
.tab-menu {
    width: 12px;
    height: 10px;
    margin: 9px 11px 0 auto;
}
.ime {
    position: absolute;
    top: 0;
    right: 165px;
    height: 25px;
    display: flex;
    align-items: center;
    gap: 8px;
    padding-right: 4px;
    border: 1px solid #b5cfee;
    border-top: none;
    background-color: #fff;
}
.ime svg {
    width: 16px;
    height: 16px;
}
.ime .sogou {
    width: 31px;
    height: 25px;
    margin-right: -2px;
}

/* barra de formato */
.format {
    flex: 0 0 26px;
    display: flex;
    align-items: center;
    padding: 0 4px;
}
.combo {
    position: relative;
    height: 20px;
    border: 1px solid #d9dadd;
    background-color: #fff;
}
.combo select {
    width: 100%;
    height: 18px;
    padding: 0 20px 0 5px;
    line-height: 18px;
    display: block;
}
.combo::before {
    content: "";
    position: absolute;
    right: 0;
    top: 0;
    width: 19px;
    height: 18px;
    background-color: #d9dadd;
    pointer-events: none;
}
.combo::after {
    content: "";
    position: absolute;
    right: 6px;
    top: 4px;
    width: 6px;
    height: 6px;
    border: solid #555;
    border-width: 0 1px 1px 0;
    transform: rotate(45deg);
    pointer-events: none;
}
.combo.light::before {
    background-color: #fff;
    border-left: 1px solid #d9dadd;
}
.font-combo {
    width: 145px;
}
.size-combo {
    width: 55px;
    margin: 0 2px 0 4px;
}
.size-combo select {
    padding-left: 3px;
}
.fb {
    width: 26px;
    font-family: "Liberation Serif", serif;
    font-size: 14px;
    color: #222;
}
.fb b {
    font-family: "Liberation Sans", sans-serif;
    font-size: 13px;
}
.fb em, .fb u {
    font-weight: bold;
}
.format .sep {
    margin: 0 6px 0 3px;
}
.format .tight {
    margin-right: 2px;
}
.ic {
    width: 22px;
    height: 22px;
    display: flex;
    align-items: center;
    justify-content: center;
}
.ic svg {
    width: 14px;
    height: 13px;
}
.ic svg.big {
    width: 16px;
    height: 14px;
}
.ic.drop {
    width: 32px;
    justify-content: flex-start;
    gap: 8px;
    margin-right: 8px;
}
.ic.drop + .sep {
    margin-left: -3px;
}
.ic.drop svg {
    width: 16px;
    height: 16px;
}
.ic.drop::after {
    content: "";
    width: 6px;
    height: 4px;
    background-color: #111;
    clip-path: polygon(0 0, 100% 0, 50% 100%);
}
.ic.pale {
    width: 24px;
    gap: 0;
    margin-left: 3px;
}
.ic.pale::after {
    background-color: #999;
}
.color-a {
    width: 16px;
    border-bottom: 3px solid #000;
    font: bold 14px/13px "Liberation Sans", sans-serif;
}
.ic.wide {
    width: 26px;
}
.ic.ab {
    font: bold 13px "Liberation Sans", sans-serif;
    color: #333;
}
.ic.fx {
    font: bold 12px "Liberation Serif", serif;
    color: #333;
}

/* panel de parametros */
.param {
    flex: 0 0 129px;
    display: grid;
    grid-template: 18px 101px 10px / 29px 1fr;
    background-color: #d9d9dc;
}
.ruler-x {
    grid-column: 1 / 3;
    display: flex;
    padding-left: 29px;
    border-bottom: 2px solid #8e8e8e;
    background-color: #b0b0b0;
    background-image:
        repeating-linear-gradient(90deg, #8e8e8e 0 1px, transparent 1px 10px),
        repeating-linear-gradient(90deg, #8e8e8e 0 1px, transparent 1px 50px),
        repeating-linear-gradient(90deg, #8e8e8e 0 1px, transparent 1px 100px);
    background-repeat: no-repeat;
    background-position: 29px 11px, 29px 5px, 29px 0;
}
.ruler-x span {
    flex: none;
    width: 100px;
    padding-left: 3px;
    color: #222;
    font: 9px/13px "Liberation Sans", sans-serif;
}
.ruler-y {
    margin-top: -1px;
    border-left: 13px solid #a5a5a5;
    background-color: #b0b0b0;
    background-image:
        repeating-linear-gradient(#8e8e8e 0 1px, transparent 1px 10px),
        repeating-linear-gradient(#8e8e8e 0 1px, transparent 1px 50px);
    background-repeat: no-repeat;
    background-position: 11px 0, 5px 0;
}
.ruler-y span {
    display: block;
    writing-mode: vertical-rl;
    padding-top: 1px;
    font: 9px/11px "Liberation Sans", sans-serif;
    color: #222;
}
.canvas {
    position: relative;
    border: 1px solid #8e8e8e;
    border-width: 0 0 1px 1px;
    background-color: #b0b0b0;
}
.w {
    position: absolute;
    height: 21px;
    display: flex;
    align-items: center;
    justify-content: flex-end;
    padding-right: 4px;
    border: 1px solid #929292;
    white-space: nowrap;
}
.w.mid {
    justify-content: center;
    padding: 0;
}
.w.bar {
    border-color: #5e6f8f;
    padding: 0 0 0 3px;
}
.w.bar::before {
    content: "";
    flex: none;
    width: 3px;
    height: 13px;
    border-radius: 1px;
    background-color: #0d3355;
}
.w.bar input {
    flex: 1;
    min-width: 0;
    height: 18px;
    font: 12px/18px "Liberation Sans", sans-serif;
}
.w.plain {
    border-color: #929292;
    padding-left: 2px;
}
.w.plain::before {
    margin-right: -1px;
}
.r1 { top: 14px; }
.r2 { top: 57px; }
.w-date { left: 1px; width: 106px; justify-content: flex-start; gap: 3px; border: none; background-color: #a8a8a8; padding-left: 3px; }
.w-date::before { content: ""; width: 3px; height: 13px; margin-right: -1px; border-radius: 1px; background-color: #0d3355; }
.w-date .box { background: none; border-color: #555; }
.w-from { left: 113px; width: 115px; }
.w-to1 { left: 235px; width: 25px; }
.w-until { left: 271px; width: 115px; }
.w-l1 { left: 397px; width: 100px; }
.w-i1 { left: 505px; width: 84px; }
.w-l2 { left: 602px; width: 77px; }
.w-min { left: 679px; width: 58px; }
.w-to2 { left: 744px; width: 25px; }
.w-max { left: 775px; width: 56px; }
.w-kh { left: 0; width: 81px; }
.w-ikh { left: 90px; width: 111px; }
.w-ph { left: 220px; width: 67px; }
.w-iph { left: 287px; width: 99px; }
.w-idw { left: 691px; width: 140px; }
.w-btn {
    left: 899px;
    width: 68px;
    justify-content: center;
    padding: 0;
    border-color: #666;
    background-image: linear-gradient(#a8a8a8, #8f8f8f);
}
.w-btn.picked {
    outline: 1px solid #4f7fb5;
    border-color: #4f7fb5;
}
.cal {
    flex: none;
    width: 20px;
    height: 21px;
    padding: 2px 1px;
    border: 1px solid #555;
    border-radius: 3px;
    color: #222;
}
.cal svg {
    width: 16px;
    height: 16px;
}
.handles {
    position: absolute;
    left: 894px;
    top: 52px;
    width: 80px;
    height: 32px;
    pointer-events: none;
}
.px {
    position: absolute;
    color: #5c7a96;
    line-height: 12px;
}
.px-top { left: 899px; top: -1px; padding-left: 2px; }
.px-left { left: 2px; top: 57px; }
.eye, .pencil {
    position: absolute;
    top: 24px;
    width: 31px;
    height: 31px;
}
.eye { left: 596px; }
.pencil { left: 647px; }

.box {
    appearance: none;
    flex: none;
    width: 13px;
    height: 13px;
    border: 1px solid #8e8e8e;
    background-image: linear-gradient(135deg, #ddd, #fff);
}
.box:checked::before {
    content: "";
    display: block;
    width: 9px;
    height: 8px;
    margin: 1px;
    background-color: #148a1c;
    clip-path: polygon(0 35%, 35% 65%, 90% 0, 100% 30%, 40% 100%, 0 70%);
}

/* hoja */
.sheet {
    flex: 1;
    min-height: 0;
    display: flex;
}
.grid-wrap {
    position: relative;
    flex: 1;
    min-width: 0;
    overflow: hidden;
    background-color: #fff;
}
.grid {
    width: 100%;
    table-layout: fixed;
    border-collapse: separate;
    border-spacing: 0;
}
.c-n { width: 25px; }
.c-a { width: 95px; }
.c-c { width: 163px; }
.c-d { width: 142px; }
.c-e { width: 215px; }
.c-f { width: 94px; }
.c-g { width: 98px; }
.c-h { width: 77px; }
.c-i { width: 114px; }
.c-j { width: 72px; }
.grid th, .grid td {
    position: relative;
    height: 19px;
    padding: 0;
    border: 0 solid #bdbdbd;
    border-width: 0 1px 1px 0;
    text-align: center;
    font-weight: normal;
    line-height: 16px;
}
.grid thead th {
    height: 20px;
    padding: 2px 2px 0 0;
    background-color: #e8e8e8;
    border-right-color: #d3d3d6;
    font-family: "Liberation Serif", serif;
    font-size: 12px;
}
.grid thead .out {
    background-color: #fff;
}
.grid thead .corner {
    background-color: #f4f4f7;
}
.corner svg {
    width: 10px;
    height: 9px;
    margin: 0 auto;
}
.grid tbody th {
    padding-right: 2px;
    border-bottom-color: #d3d3d6;
    font-family: "Liberation Sans", sans-serif;
    font-size: 11px;
}
.grid .row1 > * { height: 37px; }
.grid .row2 > * { height: 31px; }
.grid .row3 > * { height: 41px; }
.grid .row1 th, .grid .row2 th {
    background-color: #e8e8e8;
    border-right-color: #99ccff;
}
.grid .row1 > *, .grid .row3 td {
    padding-top: 3px;
}
.grid .hot, .grid thead .hot {
    background-color: #cfeffb;
}
.grid .row3 th {
    border-right-color: #000;
}
.grid .shade {
    border-color: #99ccff;
    background-image: linear-gradient(#f4faff 0, #edf5fd 42%, #dbe9f2 58%, #cde2e9 90%);
    font-size: 13px;
}
.grid .row1 .title {
    border-bottom-color: #99ccff;
    border-right-color: transparent;
    font: bold 20px/26px "Liberation Serif", "Noto Sans CJK SC", serif;
}
.grid .row2 .shade {
    border-bottom-color: #000;
}
.grid .ink {
    border-color: #000;
}
.grid .start {
    text-align: left;
    padding-left: 2px;
}
.grow {
    position: absolute;
    left: 0;
    top: 0;
    width: 6px;
    height: 6px;
}
.parent {
    position: absolute;
    left: 1px;
    top: 14px;
    width: 5px;
    height: 12px;
}
.mark {
    position: absolute;
    right: 0;
    bottom: 1px;
}
.mark-text { width: 14px; height: 10px; }
.mark-tick { width: 15px; height: 7px; bottom: 2px; }
.mark-cal { width: 14px; height: 14px; bottom: 0; color: #555; }
.mark-box {
    width: 14px;
    height: 10px;
    border: 1px solid #8ea4c8;
    border-right: none;
}
.mark-num {
    width: 14px;
    height: 10px;
    border: 1px solid #777;
    border-right: none;
    color: #999;
    font: 8px/8px "Liberation Sans", sans-serif;
}
.cursor {
    position: absolute;
    inset: -2px;
    border: 3px solid #3a86f0;
    z-index: 2;
}
.cursor::after {
    content: "";
    position: absolute;
    right: -4px;
    bottom: -4px;
    width: 5px;
    height: 5px;
    background-color: #3a86f0;
}
.page-line {
    position: absolute;
    top: 20px;
    bottom: 0;
    width: 1px;
    background-image: repeating-linear-gradient(#000 0 8px, #fff 8px 12px, #000 12px 14px, #fff 14px 18px);
}
.page-1 { left: 639px; }
.page-2 { left: 1238px; }
.vscroll {
    flex: 0 0 17px;
    display: flex;
    flex-direction: column;
    padding-left: 1px;
}
.vscroll button, .hscroll button {
    flex: none;
    display: flex;
    align-items: center;
    justify-content: center;
    background-color: #fff;
}
.vscroll button {
    height: 16px;
}
.vscroll svg {
    width: 10px;
    height: 6px;
}
.vscroll i {
    flex: 1;
    margin-bottom: 22px;
    background-color: #e0e0e0;
}
.hscroll {
    flex: 0 0 16px;
    display: flex;
}
.hscroll button {
    width: 16px;
}
.hscroll svg {
    width: 6px;
    height: 10px;
}
.hscroll i {
    flex: 1;
    margin-right: 94px;
    background-color: #e0e0e0;
}
.status {
    flex: 0 0 12px;
    overflow: hidden;
}
.status-in {
    height: 22px;
    display: flex;
    align-items: center;
}
.sheet-tab {
    width: 67px;
    height: 22px;
    margin-right: 12px;
    padding-left: 8px;
    display: flex;
    align-items: center;
    gap: 4px;
    background-color: #fff;
    color: #444;
}
.sheet-tab svg {
    width: 9px;
    height: 12px;
}
.sheet-add {
    margin-right: 8px;
}
.sheet-add svg {
    width: 22px;
    height: 14px;
}
.zoom {
    display: flex;
    align-items: center;
    margin-left: auto;
    padding-right: 6px;
    font: 11px "Liberation Sans", sans-serif;
}
.zoom svg {
    width: 10px;
    height: 10px;
}
.zoom .z-prev, .zoom .z-next {
    width: 5px;
    margin-right: 19px;
}
.zoom input {
    appearance: none;
    width: 214px;
    height: 2px;
    margin: 0 15px 0 7px;
    background-color: #ccc;
}
.zoom input::-webkit-slider-thumb {
    appearance: none;
    width: 4px;
    height: 12px;
    border-radius: 2px;
    background-color: #333;
}
.zoom span {
    margin-left: 13px;
}

/* dialogo */
.dialog {
    position: absolute;
    left: 265px;
    top: 394px;
    width: 656px;
    height: 620px;
    padding: 0 5px 0 4px;
    border: 1px solid #666;
    background-color: #f4f4f7;
    box-shadow: 2px 2px 16px rgba(0, 0, 0, 0.4);
    display: flex;
    flex-direction: column;
}
.dialog button {
    white-space: nowrap;
}
.dlg-title {
    flex: 0 0 25px;
    display: flex;
    align-items: center;
    justify-content: space-between;
    margin: 0 -5px 0 -4px;
    padding: 0 10px 2px 3px;
    background-color: #fff;
}
.dlg-title svg {
    width: 11px;
    height: 11px;
}
.dlg-tabs {
    flex: 0 0 28px;
    display: flex;
    align-items: flex-end;
    gap: 1px;
    padding: 6px 2px 0;
}
.dlg-tabs button {
    height: 22px;
    padding: 0 6px;
    border: 1px solid #8fa0b8;
    border-bottom: none;
    border-radius: 2px 2px 0 0;
    background-color: #d3d3d8;
}
.dlg-tabs .on {
    padding: 0 6px 4px;
    border-top: 3px solid #3f9bf9;
    background-color: #f4f4f7;
}
.dlg-pane {
    flex: 0 0 513px;
    display: flex;
    border: 2px solid #8fa0b8;
    border-right-color: #a0a3a6;
    border-top-width: 1px;
}
.dlg-left {
    width: 178px;
    border-right: 1px solid #d3d3d6;
    display: flex;
    flex-direction: column;
}
.dlg-tools {
    display: flex;
    align-items: center;
    gap: 12px;
    height: 26px;
    padding-left: 8px;
}
.dlg-tools svg {
    width: 14px;
    height: 14px;
}
.dlg-tools button:first-child svg {
    width: 22px;
}
.dlg-tools button:nth-child(3) svg, .dlg-tools button:last-child svg {
    width: 16px;
    height: 16px;
}
.dlg-tools button:nth-child(4) svg, .dlg-tools button:nth-child(5) svg {
    width: 12px;
}
.dlg-list {
    flex: 1;
    border: 1px solid #d3d3d6;
    border-width: 0 0 1px 1px;
    background-color: #fff;
}
.dlg-list li {
    display: flex;
    align-items: center;
    height: 18px;
    padding-left: 2px;
    background-color: #419bf9;
    color: #fff;
}
.dlg-list svg {
    width: 14px;
    height: 12px;
    margin-right: 5px;
}
.dlg-split {
    width: 8px;
    padding: 3px 0 0 2px;
    border-right: 1px solid #999;
}
.dlg-split svg {
    width: 4px;
    height: 18px;
}
.dlg-main {
    flex: 1;
    min-width: 0;
    padding: 0 6px 0 5px;
}
.legend {
    display: flex;
    align-items: center;
    gap: 2px;
    height: 16px;
    margin: 0 -3px;
}
.legend::before, .legend::after {
    content: "";
    width: 4px;
    height: 1px;
    background-color: #e2e2e5;
}
.legend::after {
    flex: 1;
}
.line {
    display: flex;
    margin: 2px 0 3px;
}
.line-type, .line-db {
    align-items: center;
    height: 20px;
}
.line-type {
    gap: 13px;
    padding-left: 10px;
}
.line-type .combo {
    width: 78px;
}
.line-db {
    gap: 6px;
    white-space: nowrap;
}
.line-db .combo {
    width: 88px;
}
.line-db select {
    padding-left: 3px;
}
.l3 { width: 42px; }
.l2 { width: 30px; }
.l1 { width: 18px; }
.sq {
    width: 24px;
    height: 20px;
    display: flex;
    align-items: center;
    justify-content: center;
    border: 1px solid #d3d3d6;
    background-color: #fff;
}
.sq svg {
    width: 14px;
    height: 14px;
}
.line-values {
    gap: 4px;
    height: 296px;
}
.values {
    flex: 0 0 322px;
    border: 1px solid #d0d0d3;
}
.values table {
    width: 100%;
    table-layout: fixed;
    border-collapse: separate;
    border-spacing: 0;
}
.values th {
    height: 21px;
    padding: 0;
    font-weight: normal;
    background-color: #e5e5e5;
    background-image: linear-gradient(#b9b4a4, #b9b4a4);
    background-size: 1px 14px;
    background-position: right center;
    background-repeat: no-repeat;
    border-bottom: 1px solid #f4f4f4;
}
.values th:first-child {
    width: 50px;
}
.values td {
    height: 20px;
    padding: 0 0 0 1px;
    border: 0 solid #cfcfcf;
    border-width: 0 1px 1px 0;
    background-color: #fff;
    line-height: 16px;
    white-space: nowrap;
}
.values td:first-child {
    padding: 0;
}
.values .sel td {
    background-color: #c9dce9;
}
.values .box {
    display: block;
    margin: 0 auto;
}
.ops {
    flex: 1;
    display: flex;
    flex-direction: column;
    gap: 4px;
}
.ops button, .line-cond button, .event-btn, .dlg-foot button {
    height: 20px;
    border: 1px solid #d9d9dc;
    background-color: #fff;
    line-height: 16px;
}
.ops button {
    padding-left: 14px;
}
.ops label {
    display: flex;
    align-items: center;
    gap: 4px;
    margin-top: 2px;
    color: #8a8a8a;
}
.help {
    width: 13px;
    height: 13px;
    margin: 0 4px 0 auto;
    border-radius: 50%;
    background-color: #1186ec;
    color: #fff;
    text-align: center;
    font: bold 11px/13px "Liberation Sans", sans-serif;
}
.line-cond textarea {
    flex: 1;
    height: 59px;
    resize: none;
    border: 1px solid #d3d3d6;
    background-color: #dfe0e2;
}
.line-cond button {
    flex: 0 0 110px;
}
.event-btn {
    width: 92px;
    margin-top: 6px;
}
.dlg-foot {
    display: flex;
    justify-content: flex-end;
    gap: 10px;
    padding: 6px 9px 0 0;
}
.dlg-foot button {
    width: 44px;
}

/* recuadros rojos */
.note {
    position: absolute;
    border: 3px solid #ff2010;
    border-radius: 4px;
    pointer-events: none;
}
.note-grid {
    left: 0;
    top: 205px;
    width: 1052px;
    height: 165px;
}
.note-values {
    left: 430px;
    top: 527px;
    width: 359px;
    height: 276px;
}

/* panel derecho */
.rail {
    flex: 0 0 40px;
    display: flex;
    flex-direction: column;
    align-items: center;
    gap: 4px;
    padding-top: 5px;
    background-color: #e7e7e7;
}
.rail-arrow {
    width: 6px;
    height: 12px;
    margin-bottom: 7px;
}
.rail button {
    width: 32px;
    height: 28px;
    display: flex;
    align-items: center;
    justify-content: center;
}
.rail button svg {
    width: 16px;
    height: 16px;
}
.rail button .wide-icon {
    width: 18px;
}
.rail .on {
    background-color: #f4f4f7;
}
.props {
    flex: 0 0 172px;
    overflow: hidden;
}
.props h2 {
    height: 26px;
    margin: 0;
    padding-left: 9px;
    border-bottom: 1px solid #d9d9dc;
    font-size: 12px;
    font-weight: normal;
    line-height: 24px;
}
.prop-tabs {
    display: grid;
    grid-template-columns: 62px 59px 63px;
    height: 25px;
    margin-bottom: 10px;
}
.prop-tabs button {
    padding-bottom: 1px;
    background-color: #d9dadd;
}
.prop-tabs .on {
    background-color: #f0f0f2;
}
.props h3 {
    height: 24px;
    margin: 0 0 10px 5px;
    padding-left: 4px;
    background-color: #ececec;
    font-size: 12px;
    font-weight: normal;
    line-height: 26px;
}
.prop {
    display: flex;
    justify-content: space-between;
    height: 22px;
    margin-bottom: 10px;
    padding-left: 9px;
    line-height: 14px;
    white-space: nowrap;
}
.prop select {
    width: 94px;
    height: 20px;
    padding-left: 5px;
    border: 1px solid #d9d9dc;
    border-right: none;
    background-color: #fff;
}
.prop + .prop + .prop {
    margin: 12px 0;
}
.seg {
    display: flex;
    width: 94px;
    height: 22px;
    overflow: hidden;
    border: 1px solid #d9d9dc;
    border-right: none;
    background-color: #fff;
    color: #444;
}
.seg button {
    flex: 0 0 51px;
    display: flex;
    align-items: center;
    justify-content: center;
}
.seg svg {
    width: 16px;
    height: 16px;
}
.seg .on {
    background-color: #419bf9;
    color: #fff;
}
.prop-check {
    display: flex;
    align-items: center;
    gap: 4px;
    height: 14px;
    margin-bottom: 11px;
    padding-left: 10px;
}
.prop-check input {
    appearance: none;
    width: 13px;
    height: 13px;
    background-color: #2f8fee;
}
.prop-check input::before {
    content: "";
    display: block;
    width: 9px;
    height: 8px;
    margin: 2px;
    background-color: #fff;
    clip-path: polygon(0 45%, 12% 32%, 38% 70%, 88% 0, 100% 14%, 40% 100%);
}
.sort .seg {
    width: 90px;
}
```

FILE: script.js
```js
// filas vacias de la hoja
const rows = document.getElementById('rows');
for (let n = 5; n <= 37; n++) {
    const tr = document.createElement('tr');
    tr.innerHTML = `<th>${n}</th>` + '<td></td>'.repeat(13);
    rows.appendChild(tr);
}

// campos de la tabla de envio
const fields = [
    ['jfrq', 'D3'],
    ['jfsl', 'E3'],
    ['code', 'C3'],
    ['uid', '=if(len(B3) = 0, uu...'],
    ['dw', 'I3'],
    ['kh', 'F3'],
    ['gd', 'H3'],
    ['ph', 'G3']
];
document.getElementById('fields').innerHTML = fields.map(([col, val], i) => `
    <tr class="${i === 0 ? 'sel' : ''}">
        <td><input type="checkbox" class="box" aria-label="${col}" ${col === 'uid' ? 'checked' : ''}></td>
        <td class="m">${col}</td>
        <td class="m">${val}</td>
    </tr>`).join('');
```
